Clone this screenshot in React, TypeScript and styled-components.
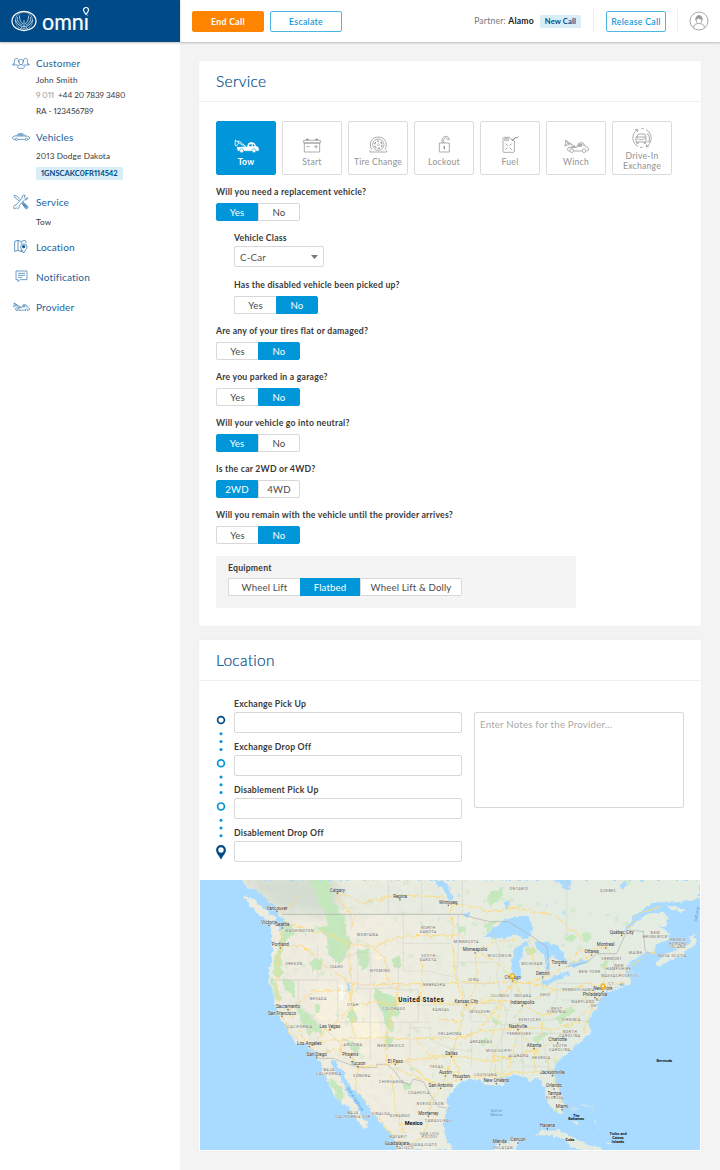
import React from "react";
import styled, { createGlobalStyle } from "styled-components";

const Global = createGlobalStyle`
  * { box-sizing: border-box; }
  body { margin: 0; background: #f3f3f3; font-family: Lato, "Open Sans", sans-serif; color: #3a3a3a; font-variant-numeric: proportional-nums; }
  button, input, textarea { font-family: inherit; outline: none; }
`;

const navy = "#004b87";
const blue = "#0096d9";

const Page = styled.div`
  width: 720px;
  height: 1170px;
  display: grid;
  grid-template-columns: 180px 540px;
  grid-template-rows: 42px 1fr;
  overflow: hidden;
`;

const Brand = styled.div`
  background: ${navy};
  box-shadow: 0 1px 2px rgba(0, 0, 0, 0.25);
  z-index: 2;
  padding: 6px 0 0 10px;
`;

const TopBar = styled.header`
  background: #fff;
  box-shadow: 0 1px 2px rgba(0, 0, 0, 0.24);
  z-index: 1;
  display: flex;
  align-items: center;
  padding: 0 11px 0 12px;
`;

const ActionButton = styled.button<{ $w: number; $solid?: boolean }>`
  width: ${(p) => p.$w}px;
  height: 21px;
  padding: 0;
  margin-right: 6px;
  border-radius: 2px;
  border: 1px solid ${(p) => (p.$solid ? "#ff8400" : "#4db8e5")};
  background: ${(p) => (p.$solid ? "#ff8400" : "#fff")};
  color: ${(p) => (p.$solid ? "#fff" : blue)};
  font-size: 8.8px;
  font-weight: ${(p) => (p.$solid ? 700 : 500)};
  letter-spacing: 0.26px;
  line-height: 20px;
`;

const Partner = styled.div`
  margin-left: auto;
  font-size: 8.6px;
  letter-spacing: 0.2px;
  color: #777;
  white-space: nowrap;
  b { color: #222; }
`;

const Tag = styled.span<{ $tight?: boolean }>`
  display: inline-block;
  height: 13px;
  line-height: 13px;
  margin-left: ${(p) => (p.$tight ? 0 : 6)}px;
  padding: 0 5px;
  border-radius: 2px;
  background: #d9edf6;
  color: ${navy};
  font-size: 7.6px;
  font-weight: 700;
  letter-spacing: ${(p) => (p.$tight ? -0.02 : 0.12)}px;
  white-space: nowrap;
`;

const Divider = styled.i<{ $l: number; $r: number }>`
  width: 1px;
  height: 24px;
  background: #efefef;
  margin: 0 ${(p) => p.$r}px 0 ${(p) => p.$l}px;
`;

const Sidebar = styled.nav`
  background: #fff;
  padding: 13px 0 0 12px;
`;

const NavSection = styled.section<{ $gap: number }>`
  margin-bottom: ${(p) => p.$gap}px;
`;

const NavHead = styled.div`
  height: 16px;
  display: grid;
  grid-template-columns: 18px 1fr;
  column-gap: 6px;
  align-items: center;
  color: #1c5f9b;
  font-size: 10.1px;
  letter-spacing: 0.13px;
  svg { display: block; justify-self: center; }
`;

const NavItem = styled.div<{ $top?: number; $track?: number }>`
  margin: ${(p) => p.$top ?? 0}px 0 0 24px;
  height: 15.7px;
  line-height: 15.7px;
  font-size: 8.2px;
  letter-spacing: ${(p) => p.$track ?? 0.2}px;
`;

const Prefix = styled.span`
  color: #999;
  margin-right: 4px;
`;

const Main = styled.main`
  padding: 19px 19px 0 19px;
`;

const Card = styled.section`
  width: 502px;
  background: #fff;
  border-radius: 1px;
  box-shadow: 0 0 1px rgba(0, 0, 0, 0.12);
  margin-bottom: 14px;
`;

const CardTitle = styled.h2`
  margin: 0;
  height: 41px;
  line-height: 40px;
  padding-left: 17px;
  border-bottom: 1px solid #efefef;
  font-size: 15.5px;
  font-weight: 300;
  letter-spacing: 0.3px;
  color: #004b87;
  -webkit-text-stroke: 0.2px #004b87;
`;

const ServiceBody = styled.div`
  height: 524px;
  padding: 19px 17px 0;
`;

const Tiles = styled.div`
  display: flex;
  gap: 6px;
  margin-bottom: 10px;
`;

const Tile = styled.button<{ $on?: boolean; $bottom: number }>`
  width: 60px;
  height: 54px;
  padding: 0 0 ${(p) => p.$bottom}px;
  display: flex;
  flex-direction: column;
  justify-content: flex-end;
  align-items: center;
  gap: ${(p) => (p.$bottom < 6 ? 3 : 4)}px;
  border: 1px solid ${(p) => (p.$on ? blue : "#dadada")};
  border-radius: 2px;
  background: ${(p) => (p.$on ? blue : "#fff")};
  color: ${(p) => (p.$on ? "#fff" : "#999")};
  font-size: 8.6px;
  font-weight: ${(p) => (p.$on ? 700 : 500)};
  letter-spacing: 0.25px;
  line-height: 10px;
  white-space: pre-line;
`;

const Field = styled.div<{ $indent?: boolean; $h?: number; $gap?: number }>`
  height: ${(p) => p.$h ?? 46.15}px;
  padding-left: ${(p) => (p.$indent ? 18 : 0)}px;
  display: flex;
  flex-direction: column;
  align-items: flex-start;
  gap: ${(p) => p.$gap ?? 3.8}px;
`;

const Label = styled.label`
  height: 14px;
  line-height: 14px;
  font-size: 8.7px;
  font-weight: 700;
  letter-spacing: 0.21px;
  white-space: nowrap;
`;

const Group = styled.div`
  display: flex;
`;

const Option = styled.button<{ $on?: boolean; $w: number }>`
  width: ${(p) => p.$w}px;
  height: 18px;
  padding: 0;
  border: 1px solid ${(p) => (p.$on ? blue : "#d8d8d8")};
  border-right-width: ${(p) => (p.$on ? 1 : 0)}px;
  background: ${(p) => (p.$on ? blue : "#fff")};
  color: ${(p) => (p.$on ? "#fff" : "#4a4a4a")};
  font-size: 9.7px;
  letter-spacing: 0.12px;
  line-height: 16px;
  &:first-child { border-radius: 2px 0 0 2px; }
  &:last-child { border-radius: 0 2px 2px 0; border-right-width: 1px; }
`;

const Select = styled.div`
  width: 90px;
  height: 21px;
  border: 1px solid #d8d8d8;
  border-radius: 2px;
  padding: 0 5px;
  display: flex;
  align-items: center;
  justify-content: space-between;
  font-size: 9.8px;
  letter-spacing: 0.15px;
  color: #555;
`;

const Equipment = styled.div`
  width: 360px;
  height: 52px;
  margin-top: 1.5px;
  padding: 5px 12px;
  background: #f4f4f4;
  border-radius: 1px;
`;

const LocationBody = styled.div`
  height: 199px;
  padding: 16px 17px 0;
  display: grid;
  grid-template-columns: 10px 228px 210px;
  column-gap: 8px;
`;

const Route = styled.div`
  padding-top: 15px;
`;

const Addresses = styled.div`
  display: flex;
  flex-direction: column;
`;

const Input = styled.input`
  width: 228px;
  height: 21px;
  border: 1px solid #d8d8d8;
  border-radius: 2px;
  background: #fff;
`;

const Notes = styled.textarea`
  width: 210px;
  height: 96px;
  margin: 15px 0 0 4px;
  padding: 5px 5px;
  border: 1px solid #d8d8d8;
  border-radius: 2px;
  resize: none;
  font-size: 9.7px;
  line-height: 12px;
  letter-spacing: 0.19px;
  &::placeholder { color: #aaa; opacity: 1; }
`;

const MapFrame = styled.div`
  padding: 0 1px 1px;
  height: 271px;
  svg { display: block; }
`;

/* ---------- icons ---------- */

const Logo = () => (
  <svg width="84" height="32" viewBox="0 0 84 32" fill="none" stroke="#fff">
    <ellipse cx="14" cy="15" rx="12" ry="9.6" strokeWidth="1.2" />
    <ellipse cx="14" cy="14.6" rx="8.6" ry="8.6" strokeWidth="0.7" opacity="0.7" />
    <path d="M7.500 11c-.8 4 1.500 6.500 4.500 8M9.500 9.500c-.4 4 1 6.500 3.500 8.500M20.500 11c.8 4-1.500 6.500-4.500 8M18.500 9.500c.4 4-1 6.500-3.500 8.500M5.500 14c1 3.500 3.500 5.500 7 6.500M22.500 14c-1 3.500-3.500 5.500-7 6.500M14 14v9M10.500 22.500l3.500-3 3.500 3" strokeWidth="0.8" opacity="0.85" />
    <text x="32" y="23.600" fontSize="24" fontWeight="400" fontFamily="Lato" fill="#fff" stroke="#fff" strokeWidth="0.2" textLength="47" lengthAdjust="spacingAndGlyphs">omni</text>
    <path d="M76 8.200c-1.500-2-2.400-2.900-2.400-4.300a2.400 2.400 0 0 1 4.800 0c0 1.400-.9 2.300-2.400 4.300z" fill={navy} stroke={navy} strokeWidth="3.400" />
    <path d="M76 8.400c-1.600-2-2.500-2.900-2.500-4.400a2.500 2.500 0 0 1 5 0c0 1.500-.9 2.400-2.500 4.400z" strokeWidth="1.200" />
  </svg>
);

const Avatar = () => (
  <svg width="20" height="20" viewBox="0 0 60 60" fill="none" stroke="#999" strokeWidth="2.600">
    <circle cx="30" cy="30" r="27" />
    <path d="M20 27c0-8 3-13 10-13s10 5 10 13" />
    <path d="M21 24c0 9 3 14 9 14s9-5 9-14c-6 1-9-1-10-3-2 2-4 3-8 3z" />
    <path d="M22 18c3-6 13-6 16 0l1 6c-5 0-8-1-10-4-2 3-4 4-8 4z" fill="#999" stroke="none" />
    <path d="M14 50c0-8 4-11 12-12M46 50c0-8-4-11-12-12" />
  </svg>
);

const People = () => (
  <svg width="18" height="12" viewBox="0 0 54 36" fill="none" stroke="#3d7db3" strokeWidth="2.200">
    <path d="M5 23c3-3 2-9 3-14 1-6 9-7 11-1 1 4 0 7 2 9M18 24H2c0-3 2-4 5-4M49 23c-3-3-2-9-3-14-1-6-9-7-11-1-1 4 0 7-2 9M36 24h16c0-3-2-4-5-4" />
    <path d="M21 13c0-8 12-8 12 0 0 5-1 10-6 10s-6-5-6-10zM24 22c0 4-6 3-7 6s1 6 4 6h12c3 0 5-3 4-6s-7-2-7-6" />
  </svg>
);

const Car = () => (
  <svg width="18" height="8" viewBox="0 0 54 24" fill="none" stroke="#3d7db3" strokeWidth="2.300">
    <path d="M8 19H4c-3-2-3-7 1-9l8-2c5-6 9-6 14-6 7 0 10 3 14 7 6 0 11 1 12 6 0 3-1 4-5 4M18 19h20" />
    <path d="M14 9h27M27 2v7M17 8l5-5M20 6h15" />
    <circle cx="13" cy="19" r="3.600" /><circle cx="43" cy="19" r="3.600" />
  </svg>
);

const Tools = () => (
  <svg width="16" height="16" viewBox="0 0 48 48" fill="none" stroke="#3d7db3" strokeWidth="2.300">
    <path d="M5 3l9 5 4 5 8 9-3 3-9-8-6-4-5-8z" />
    <path d="M27 28l3-4 14 13c3 4-3 10-7 6z" fill="#3d7db3" fillOpacity="0.5" />
    <path d="M29 29l11 11M32 28l10 10M30 32l8 8" />
    <path d="M44 11l-6 3-4-4 3-6c-7-2-12 3-10 9L9 33c-7 0-9 6-5 12l6-4 4 4c6-4 5-8 4-10l17-18c5 2 10-1 9-6z" fill="#fff" />
  </svg>
);

const MapIcon = () => (
  <svg width="14" height="15" viewBox="0 0 42 45" fill="none" stroke="#3d7db3" strokeWidth="2.400">
    <path d="M2 7l10-3 10 4 8-4 6 3v5M2 7v30l10-3 10 4M12 4v30M22 8v6M22 31v7l5-2" />
    <path d="M29 42c-5-9-9-13-9-18a9.500 9.500 0 0 1 19 0c0 5-5 9-10 18z" />
    <circle cx="29" cy="23" r="3.600" fill={navy} stroke={navy} />
  </svg>
);

const Message = () => (
  <svg width="13" height="13" viewBox="0 0 39 39" fill="none" stroke="#3d7db3" strokeWidth="2.200">
    <path d="M3 3h33v26H15l-6 6v-6H3zM9 10h21M9 16h21M9 22h13" />
  </svg>
);

const Truck = ({ w, color }: { w: number; color: string }) => (
  <svg width={w} height={(w * 42) / 75} viewBox="0 0 75 42" fill="none" stroke={color} strokeWidth={w < 20 ? 3 : 2.200} strokeLinejoin="round">
    <path d="M3 3l31 20H24L6 5M6 5L4 20c-2 2-3 0-2-2M12 12l-6 10M16 13l-3 6" />
    <path d="M17 36h-4c-3-3-3-7-1-10l26-1 6-12c2-2 10-2 15 0l5 9c8 2 9 4 9 12l-5 2M30 36h23" />
    <path d="M42 22l4-7h7v7zM56 15l4 7" strokeWidth="1.800" fill={color} fillOpacity="0.6" />
    <circle cx="23" cy="35" r="5.500" />
    <circle cx="60" cy="35" r="5.500" />
  </svg>
);

const TowSolid = () => (
  <svg width="25" height="14" viewBox="0 0 75 42" fill="#fff" stroke="#fff" strokeLinejoin="round">
    <path d="M3 3l29 20M9 7h8l19 16M4 4L3 18c1 3 4 2 4 0M14 12l-7 10" fill="none" strokeWidth="2.600" />
    <path d="M9 25l30-1 5-11c3-3 13-3 17 0l5 9c7 2 8 4 8 13H12z" strokeWidth="1.500" />
    <path d="M44 22l3-6h6v6zM56 16h3l3 6h-6z" fill={blue} stroke="none" />
    <circle cx="23" cy="35" r="6" stroke={blue} strokeWidth="1.500" />
    <circle cx="60" cy="35" r="6" stroke={blue} strokeWidth="1.500" />
  </svg>
);

const grey = { fill: "none", stroke: "#8f8f8f", strokeWidth: 2.2 } as const;

const Battery = () => (
  <svg width="18" height="15" viewBox="0 0 54 45" {...grey}>
    <path d="M2 7h50v8H2zM4 15h46v27H4zM10 26h10M34 26h10M39 21v10" /><path d="M9 4h8M37 4h8" strokeWidth="4" />
  </svg>
);
const Tire = () => (
  <svg width="19" height="17" viewBox="0 0 57 51" {...grey}>
    <path d="M8 41C-2 22 8 3 28 3s30 19 20 38M3 48h50M3 43v5M53 43v5" />
    <circle cx="28" cy="26" r="17" />
    <circle cx="28" cy="26" r="11" strokeWidth="3.600" strokeDasharray="7 4.520" />
    <circle cx="28" cy="26" r="3" strokeWidth="1.400" />
  </svg>
);
const Lock = () => (
  <svg width="13" height="18" viewBox="0 0 39 54" {...grey}>
    <path d="M4 24h30v27H4zM12 24v-8M12 17c0-17 21-17 22-3h-5c-1-8-11-8-12 2v8" /><path d="M19 33v10" strokeWidth="4" />
  </svg>
);
const Fuel = () => (
  <svg width="17" height="18" viewBox="0 0 51 54" {...grey}>
    <path d="M3 13c0-6 3-6 6-6h14l6 6 8 5v31c0 2-1 3-3 3H6c-2 0-3-1-3-3zM8 11h12v5H8z" />
    <path d="M28 14l5 3 6-9h7l4-4M34 13l6-6" strokeWidth="3" />
    <path d="M11 26l6 6M23 38l6 6M29 26l-6 6M17 38l-6 6" strokeWidth="2.600" />
  </svg>
);
const Exchange = () => (
  <svg width="20" height="20" viewBox="0 0 60 60" {...grey}>
    <path d="M18 55C-2 46-2 16 15 6M9 5l8-1-1 8M42 5c20 9 20 39 3 50M51 55l-8 2 1-8M28 2h7M24 58h8" />
    <path d="M14 27l5-9h19l4 9v15H12V27zM12 27h30M14 42v4h5v-4M36 42v4h5v-4M14 33h6M34 33h6M21 35h12M44 19h5l3 8v14h-6" />
  </svg>
);

const RouteMarks = () => {
  const stops = [8, 51.2, 94.4];
  return (
    <svg width="10" height="150" viewBox="0 0 10 150" fill="none">
      {stops.map((y, i) => (
        <g key={y}>
          <circle cx="5" cy={y} r="3.400" stroke={i === 0 ? navy : blue} strokeWidth="1.700" />
          {[13.800, 21.600, 29.400].map((d) => <circle key={d} cx="5" cy={y + d} r="1.500" fill={blue} />)}
        </g>
      ))}
      <path d="M5 147.500c-2.500-4.500-4.900-6.500-4.900-9.500a4.900 4.900 0 0 1 9.800 0c0 3-2.400 5-4.900 9.500z" fill={navy} />
      <circle cx="5" cy="138" r="2.700" fill="#fff" />
    </svg>
  );
};

/* ---------- map ---------- */

type Mark = [string, number, number];

const westCities: Mark[] = [
  ["Calgary", 427, 50], ["Regina", 615, 70], ["Vancouver", 246, 104], ["Victoria", 222, 146], ["Seattle", 262, 154],
  ["Portland", 256, 214], ["Sacramento", 279, 399], ["San Francisco", 261, 419], ["Las Vegas", 405, 459],
  ["Los Angeles", 343, 510], ["San Diego", 365, 542], ["Phoenix", 466, 542], ["Tucson", 489, 570], ["El Paso", 601, 563],
  ["Austin", 751, 598], ["San Antonio", 737, 635], ["Monterrey", 700, 719], ["Guadalajara", 606, 809],
];
const eastCities: Mark[] = [
  ["Winnipeg", -5, 86], ["Minneapolis", 75, 229], ["Chicago", 188, 313], ["Detroit", 278, 301], ["Toronto", 328, 266],
  ["Ottawa", 425, 235], ["Montreal", 467, 214], ["Québec City", 515, 176], ["New York", 459, 345],
  ["Philadelphia", 435, 363], ["Kansas City", 49, 385], ["Indianapolis", 217, 387], ["Nashville", 204, 459],
  ["Charlotte", 323, 499], ["Atlanta", 252, 516], ["Dallas", 4, 540], ["Houston", 34, 609], ["New Orleans", 139, 621],
  ["Jacksonville", 307, 597], ["Orlando", 312, 637], ["Tampa", 313, 660], ["Miami", 336, 699], ["Havana", 292, 756],
  ["Mérida", 149, 803], ["Cancún", 204, 799],
];
const westStates: Mark[] = [
  ["WASHINGTON", 314, 171], ["OREGON", 297, 270], ["IDAHO", 425, 278], ["MONTANA", 518, 183], ["NORTH", 700, 162], ["DAKOTA", 700, 174],
  ["SOUTH", 700, 245], ["DAKOTA", 700, 257], ["WYOMING", 555, 292], ["NEBRASKA", 718, 332], ["NEVADA", 370, 376],
  ["UTAH", 474, 394], ["COLORADO", 597, 404], ["KANSAS", 738, 409], ["CALIFORNIA", 315, 459], ["ARIZONA", 474, 512],
  ["NEW MEXICO", 588, 517], ["TEXAS", 725, 578], ["OKLAHOMA", 765, 479], ["BAJA", 402, 587], ["CALIFORNIA", 402, 599],
  ["SONORA", 501, 606], ["CHIHUAHUA", 590, 624], ["COAHUILA", 672, 657], ["NUEVO LEON", 706, 690], ["TAMAULIPAS", 730, 740],
  ["SINALOA", 558, 721], ["DURANGO", 615, 725], ["BAJA", 474, 717], ["CALIFORNIA SUR", 474, 729], ["NAYARIT", 610, 790],
  ["SAN LUIS", 704, 779], ["POTOSI", 704, 790], ["GUANAJUATO", 684, 812], ["JALISCO", 630, 823],
];
const eastStates: Mark[] = [
  ["ONTARIO", 207, 44], ["QUEBEC", 475, 50], ["MINNESOTA", 49, 203], ["WISCONSIN", 149, 245], ["MICHIGAN", 246, 270],
  ["IOWA", 71, 318], ["ILLINOIS", 151, 366], ["INDIANA", 218, 366], ["OHIO", 285, 363], ["PENNSYLVANIA", 386, 349],
  ["NEW YORK", 419, 295], ["VERMONT", 485, 254], ["MAINE", 557, 237], ["NEW", 508, 275], ["HAMPSHIRE", 506, 286],
  ["MASSACHUSETTS", 509, 307], ["CT", 484, 330], ["RI", 517, 332], ["NJ", 446, 378], ["DE", 431, 397],
  ["MARYLAND", 399, 384], ["WEST", 320, 404], ["VIRGINIA", 320, 415], ["VIRGINIA", 364, 438], ["MISSOURI", 91, 414],
  ["KENTUCKY", 240, 437], ["TENNESSEE", 207, 479], ["NORTH", 360, 475], ["CAROLINA", 360, 487], ["SOUTH", 330, 516],
  ["CAROLINA", 330, 528], ["ARKANSAS", 93, 503], ["MISSISSIPPI", 147, 531], ["ALABAMA", 206, 546], ["GEORGIA", 274, 553],
  ["LOUISIANA", 107, 604], ["FLORIDA", 315, 671], ["NEW", 616, 177], ["BRUNSWICK", 616, 188], ["PRINCE", 684, 197],
  ["EDWARD", 684, 209], ["ISLAND", 684, 220], ["NOVA SCOTIA", 668, 245], ["YUCATAN", 160, 822],
];

const land =
  "M140 15L158 38 190 48 215 72 236 92 248 108 252 122 268 132 262 150 266 165 252 172 250 155 232 148 222 153 229 180 232 215 230 250 222 285 222 320 235 355 240 395 255 420 262 440 275 450 278 465 290 485 300 502 325 508 345 520 362 530 368 548 375 565 385 590 395 612 410 640 412 660 425 672 445 685 470 705 480 725 495 745 510 765 518 758 515 742 500 725 490 700 475 680 455 655 450 635 440 615 420 590 410 565 412 556 430 570 445 590 455 610 470 640 485 650 505 670 520 700 540 725 565 750 590 775 600 800 606 826H774L760 800 750 778 746 750 752 720 758 690 758 662 772 645 785 632 805 618 830 612 855 615 870 628 895 632 925 630 930 618 915 610 935 603 965 600 990 608 1005 620 1028 606 1045 630 1053 650 1050 668 1065 690 1080 712 1100 718 1107 700 1103 670 1090 640 1077 612 1070 590 1080 570 1105 545 1140 515 1165 490 1185 480 1190 460 1175 440 1190 425 1205 395 1220 370 1235 350 1262 333 1295 325 1298 335 1310 318 1295 300 1290 285 1305 262 1325 250 1350 232 1362 225 1370 235 1385 210 1415 195 1422 178 1408 165 1395 153 1412 148 1420 125 1400 110 1360 116 1325 140 1295 165 1285 170 1305 138 1335 105 1385 82 1450 82 1515 68V15Z";
const islands =
  "M143 62L175 72 208 100 238 128 240 140 220 137 190 115 160 92ZM1380 268L1412 236 1450 222 1490 200 1480 185 1498 180 1506 205 1470 232 1425 258 1395 273ZM1415 92L1450 95 1470 108 1460 114 1430 102ZM1428 213L1450 220 1468 213 1448 206ZM1225 350L1275 333 1285 336 1240 352ZM1015 782L1035 768 1070 765 1105 770 1140 790 1180 808 1215 815 1225 826H1140L1120 805 1075 782 1045 778ZM898 826L902 808 930 800 972 795 966 812 962 826ZM1130 735L1150 742 1142 754 1134 742ZM1235 804L1250 800 1245 810Z";
const lakes =
  "M866 185L895 160 935 130 970 122 1003 124 1012 150 1008 180 992 192 965 178 930 188 900 188ZM948 300L952 240 968 210 1000 198 1002 208 985 222 978 260 978 300 966 322 952 320ZM1015 200L1055 202 1085 212 1108 238 1112 262 1090 258 1072 240 1060 258 1062 285 1052 282 1048 238 1025 220ZM1040 326L1050 314 1090 300 1125 290 1120 300 1080 320 1055 332ZM1112 272L1130 262 1178 254 1172 266 1140 276ZM1075 15H1128L1122 40 1110 44 1095 25ZM718 15L752 22 765 55 778 72 768 76 748 58 745 38 722 30ZM810 110L824 118 814 130 804 118ZM450 322L462 330 468 348 458 346ZM928 80L942 78 940 105 930 100ZM1275 30L1290 22 1296 32 1286 42Z";
const forests =
  "M262 130L290 145 300 175 270 200 255 240 262 290 250 310 235 300 240 255 250 220 258 190ZM225 300L245 330 260 380 240 370ZM260 310L300 320 300 370 270 340ZM300 385L340 420 375 455 385 480 350 465 345 485 315 430ZM340 15L400 15 415 80 450 130 455 180 470 200 455 240 430 270 400 235 395 185 360 155 400 150 380 90ZM485 225L520 220 525 260 505 290 490 270ZM540 340L600 365 615 415 590 430 600 470 575 460 560 410 535 370ZM470 395L490 430 470 450 460 420ZM440 485L490 510 495 545 465 520ZM575 470L590 500 575 530ZM592 250L615 245 620 275 598 280ZM360 390L380 385 375 410 362 415ZM410 610L440 640 450 670 435 685 415 660 425 650 400 620ZM340 260L380 250 380 280 355 290ZM1010 490L1045 470 1055 480 1025 505ZM1080 430L1130 395 1140 405 1095 445ZM875 60L925 35 925 60 885 95ZM865 145L910 135 880 170ZM990 225L1015 215 1030 235 1000 240ZM1080 700L1095 705 1090 716 1078 710ZM890 425L915 440 905 455ZM850 500L875 485 880 500 860 515ZM790 155L810 150 812 172 795 175ZM1160 180L1185 170 1190 195 1165 200ZM1105 185L1145 180 1130 205ZM1215 270L1235 245 1240 275 1225 290ZM640 580L655 575 650 590ZM620 620L650 630 630 650Z";
const borders =
  "M262 118H805M625 118V288M368 210V315H228M468 118V165M228 315H430M310 315V385L450 520M428 315V442M430 442H700M488 232V330H526V232ZM488 330V340H610V250M526 340V555M610 345H670V442M645 442V562H575M625 205H768M625 288H700L745 300 775 305M665 390H790M645 458H706V495L765 520M470 200L430 260 488 232M790 118V210L785 300 800 330 830 440M785 262H890M805 325H905M800 385H908M830 440H920V475M890 150L915 240 905 300 920 370 935 420 925 475 895 540 885 590M830 460V575M765 520L830 530M925 475H1145M915 450L1100 430 1180 440M948 310V400M1005 320V400M920 475V600M980 475L985 600M1040 475L1062 590M985 575H1062M1085 325H1190V345L1205 360M1085 325V375L1055 410M1100 375H1205M1230 235V300H1290M1255 235V300M1115 15V180M580 15V118M680 15V118M802 15V118";
const nation =
  "M262 118H805L840 130 885 140 940 140 1012 185 1055 215 1062 270 1040 315M1120 275L1175 262 1205 236H1265L1290 180 1305 165 1345 170 1350 225 1362 235M365 550L415 550 490 578H545V568L577 568 600 590 620 620 645 630 655 612 685 620 710 665 730 695 762 700";
const roads = [
  "M258 155L300 150 360 175 380 165 455 205 530 215 600 190 640 182 800 180 840 230 895 255 945 300 955 320 1000 325 1060 300 1120 270 1200 235 1280 185",
  "M262 160L255 215 248 270 242 340 262 420M255 215L320 210 370 255 420 295 460 320 530 330 610 325 700 330 780 322 860 325 950 320 1040 330 1100 350 1180 325 1225 340 1290 320",
  "M262 420L310 385 350 350 430 345 465 350 470 395 405 460 343 512 365 545 420 520 465 540 490 575 575 570 630 555 700 550 770 540 850 555 920 555 1018 525 1090 490 1150 430 1205 370 1225 345",
  "M343 512L400 495 475 490 560 490 660 490 780 490 850 470 910 465 970 460 1080 460 1160 440M462 180L462 240 470 320 475 490M610 325L605 390 570 490 577 565M470 395L540 380 605 390 680 375 730 385 815 390 900 360 950 340",
  "M258 110L300 80 310 65M425 50L440 90 480 120 475 160M425 50L500 85 600 60 740 65 768 90M768 90L772 180 780 300 812 390 790 480 770 540 755 600 738 635 710 670 700 718M577 565L650 600 737 632 800 610 870 600 905 610 960 590 1070 595",
  "M738 575L812 600M770 540L800 610M840 230L845 330 815 390 880 435 920 370 960 320M920 370L910 430 890 480 900 560 905 610M960 320L982 385 970 460 960 520 945 570 905 610M982 385L1050 360 1090 340M982 385L920 375 815 390M970 460L1018 520 1062 570 1072 595 1090 640 1105 700M1018 520L950 550 890 545M1018 520L1020 590M1045 420L1040 480 1018 520M1043 420L1000 400 982 385M1090 490L1075 560M1043 420L1100 410 1200 350M1205 370L1180 430 1165 475",
  "M843 230L900 200 960 195M1040 300L1012 250 1005 190M1115 265L1150 230 1190 225 1232 215M1232 215L1260 270 1285 300M1225 340L1230 270M1280 185L1340 110 1400 95M1285 300L1345 240 1380 230M261 420L280 470 320 500M279 400L300 450 343 510M768 90L840 95 880 110 960 100 1080 120 1160 190",
  "M530 215L570 250 580 320M700 550L755 600M630 555L680 600 738 635M700 718L690 780 640 815M590 600L600 700 640 815M490 578L480 640 530 700 600 790 640 815M780 490L830 480 880 435M790 440L730 430M660 490L700 540 770 540M440 500L430 560M680 375V250",
];

const blobs = Array.from({ length: 190 }, (_, i) => {
  const x = 260 + ((i * 337) % 1090);
  const y = 20 + ((i * 191 + ((i * i) % 47)) % 590);
  return { x, y, r: 2 + ((i * 7) % 6), k: i % 4 };
}).filter((b) => !(b.x > 1190 && b.y > 330) && !(b.x > 1100 && b.y > 500));

const USMap = () => (
  <svg width="500" height="270" viewBox="15 15 1500 810" fontFamily="Roboto, sans-serif" textAnchor="middle">
    <defs>
      <linearGradient id="ground" x1="0" x2="1" y1="0" y2="0">
        <stop offset="0" stopColor="#eeebdf" />
        <stop offset="0.3" stopColor="#f1ede1" />
        <stop offset="0.45" stopColor="#ebede1" />
        <stop offset="0.65" stopColor="#e4ebe0" />
        <stop offset="1" stopColor="#e5ece1" />
      </linearGradient>
      <filter id="rough" x="0" y="0" width="1" height="1">
        <feTurbulence type="fractalNoise" baseFrequency="0.06" numOctaves="3" seed="4" />
        <feDisplacementMap in="SourceGraphic" scale="18" xChannelSelector="R" yChannelSelector="G" />
      </filter>
      <filter id="soft"><feGaussianBlur stdDeviation="16" /></filter>
      <filter id="relief" x="0" y="0" width="1" height="1">
        <feTurbulence type="fractalNoise" baseFrequency="0.035" numOctaves="4" seed="9" />
        <feColorMatrix values="0 0 0 0 0.55  0 0 0 0 0.6  0 0 0 0 0.56  1.600 0 0 0 -0.720" />
      </filter>
      <clipPath id="shore"><path d={land} /></clipPath>
    </defs>
    <rect x="15" y="15" width="1500" height="810" fill="#a9daff" />
    <g filter="url(#rough)">
      <path d={land + islands} fill="url(#ground)" />
      <g clipPath="url(#shore)">
        <path d="M130 0H420L450 60 400 130 330 110 262 118 220 80Z" fill="#d5ddd2" filter="url(#soft)" />
        <path d="M340 330L450 320 560 440 540 540 400 520Z" fill="#f8f2e0" opacity="0.7" filter="url(#soft)" />
        <path d="M420 15H800V118H460Z" fill="#e6ebe0" opacity="0.8" filter="url(#soft)" />
        <path d={forests} fill="#c5e8bd" />
        <path d="M475 440L550 430 555 490 500 485ZM430 330L445 335 448 370 432 372ZM470 380L500 400 480 410ZM350 410L400 430 390 440ZM530 240L570 245 550 258Z" fill="#fbf5dc" opacity="0.8" />
        <path d="M430 325L444 330 446 368 434 372Z" fill="#fafafa" />
      </g>
      {blobs.map((b, i) => (
        <ellipse key={i} cx={b.x} cy={b.y} rx={b.r * (b.k === 1 ? 0.7 : 1.300)} ry={b.r} fill={b.k === 1 && b.y < 160 && b.x > 700 ? "#a9daff" : "#c9e8c2"} opacity={b.x > 760 ? 0.6 : 0.5} />
      ))}
      <path d={lakes} fill="#a9daff" />
      <path d="M1160 690Q1190 690 1195 705M1130 700L1150 698M1195 735L1215 765M1240 770L1255 785" stroke="#dfe9df" strokeWidth="3" fill="none" />
    </g>
    <g clipPath="url(#shore)">
      <rect x="120" y="15" width="640" height="811" filter="url(#relief)" opacity="0.15" />
    </g>
    <path d={borders} fill="none" stroke="#cfcfca" strokeWidth="1.400" />
    <path d={nation} fill="none" stroke="#adb0ab" strokeWidth="2" />
    <g filter="url(#rough)" fill="none" stroke="#fbdb84" strokeWidth="3" strokeLinejoin="round">
      {roads.map((d) => <path key={d} d={d} />)}
    </g>
    {[{ dx: 0, cities: westCities, states: westStates }, { dx: 765, cities: eastCities, states: eastStates }].map((half) => (
      <g key={half.dx} transform={`translate(${half.dx} 0)`} stroke="#f3f2ea" strokeWidth="1.200" paintOrder="stroke">
        <g fontSize="11" letterSpacing="1.500" fill="#6c6c6c">
          {half.states.map(([n, x, y], i) => <text key={i} x={x} y={y}>{n}</text>)}
        </g>
        <g fontSize="13.500" fill="#333">
          {half.cities.map(([n, x, y]) => (
            <React.Fragment key={n}>
              <text x={x} y={y}>{n}</text>
              <circle cx={x} cy={y + 5} r="2.400" fill="#666" />
            </React.Fragment>
          ))}
        </g>
      </g>
    ))}
    <g fill="#111" fontWeight="700">
      <text x="679" y="380" fontSize="19" letterSpacing="1.800">United States</text>
      <text x="656" y="749" fontSize="16.500">Mexico</text>
      <g fontSize="11.500">
        <text x="1125" y="798">Cuba</text>
        <text x="1144" y="725">The</text><text x="1144" y="736">Bahamas</text>
        <text x="1408" y="560">Bermuda</text>
        <text x="1269" y="781">Turks and</text><text x="1269" y="792">Caicos</text><text x="1269" y="804">Islands</text>
      </g>
    </g>
    <g fill="#4f95d0" fontSize="11">
      <text x="904" y="711">Gulf of</text><text x="904" y="722">Mexico</text>
      <text transform="translate(477 674) rotate(57)">Gulf of California</text>
      <text transform="translate(1509 118) rotate(-78)">Gulf of St</text>
    </g>
    {[[952, 318], [1224, 348]].map(([x, y]) => (
      <g key={x} transform={`translate(${x} ${y})`}>
        <path d="M0 0C-2-6-8-9-8-15a8 8 0 0 1 16 0c0 6-6 9-8 15z" fill="#f9b71c" />
        <circle cy="-15" r="3" fill="#fff" />
      </g>
    ))}
  </svg>
);

/* ---------- composition ---------- */

const Toggle = ({ options, on, widths = [42, 42] }: { options: string[]; on: number; widths?: number[] }) => (
  <Group>
    {options.map((o, i) => (
      <Option key={o} $w={widths[i]} $on={i === on}>{o}</Option>
    ))}
  </Group>
);

const Question = ({ text, options = ["Yes", "No"], on, indent }: { text: string; options?: string[]; on: number; indent?: boolean }) => (
  <Field $indent={indent}>
    <Label>{text}</Label>
    <Toggle options={options} on={on} />
  </Field>
);

const services = [
  { name: "Tow", icon: <TowSolid /> },
  { name: "Start", icon: <Battery /> },
  { name: "Tire Change", icon: <Tire /> },
  { name: "Lockout", icon: <Lock /> },
  { name: "Fuel", icon: <Fuel /> },
  { name: "Winch", icon: <Truck w={25} color="#8f8f8f" /> },
  { name: "Drive-In\nExchange", icon: <Exchange /> },
];

export default function App() {
  return (
    <>
      <Global />
      <Page>
        <Brand><Logo /></Brand>
        <TopBar>
          <ActionButton $w={72} $solid>End Call</ActionButton>
          <ActionButton $w={72}>Escalate</ActionButton>
          <Partner>Partner: <b>Alamo</b></Partner>
          <Tag>New Call</Tag>
          <Divider $l={12} $r={12} />
          <ActionButton $w={60}>Release Call</ActionButton>
          <Divider $l={5} $r={11} />
          <Avatar />
        </TopBar>

        <Sidebar>
          <NavSection $gap={9.400}>
            <NavHead><People />Customer</NavHead>
            <NavItem $top={1.500}>John Smith</NavItem>
            <NavItem $track={-0.100}><Prefix>9 011</Prefix>+44 20 7839 3480</NavItem>
            <NavItem $track={-0.020}>RA - 123456789</NavItem>
          </NavSection>
          <NavSection $gap={12}>
            <NavHead><Car />Vehicles</NavHead>
            <NavItem $top={4.500} $track={0.140}>2013 Dodge Dakota</NavItem>
            <NavItem $top={1}><Tag $tight>1GNSCAKC0FR114542</Tag></NavItem>
          </NavSection>
          <NavSection $gap={8}>
            <NavHead><Tools />Service</NavHead>
            <NavItem $top={5}>Tow</NavItem>
          </NavSection>
          <NavSection $gap={14}><NavHead><MapIcon />Location</NavHead></NavSection>
          <NavSection $gap={14}><NavHead><Message />Notification</NavHead></NavSection>
          <NavSection $gap={0}><NavHead><Truck w={17} color="#3d7db3" />Provider</NavHead></NavSection>
        </Sidebar>

        <Main>
          <Card>
            <CardTitle>Service</CardTitle>
            <ServiceBody>
              <Tiles>
                {services.map((s, i) => (
                  <Tile key={s.name} $on={i === 0} $bottom={s.name.includes("\n") ? 3 : 7}>{s.icon}{s.name}</Tile>
                ))}
              </Tiles>
              <Question text="Will you need a replacement vehicle?" on={0} />
              <Field $indent $h={46.600} $gap={1}>
                <Label>Vehicle Class</Label>
                <Select>C-Car<svg width="7" height="4" viewBox="0 0 7 4"><path d="M0 0h7L3.500 4z" fill="#777" /></svg></Select>
              </Field>
              <Question text="Has the disabled vehicle been picked up?" on={1} indent />
              <Question text="Are any of your tires flat or damaged?" on={1} />
              <Question text="Are you parked in a garage?" on={1} />
              <Question text="Will your vehicle go into neutral?" on={0} />
              <Question text="Is the car 2WD or 4WD?" options={["2WD", "4WD"]} on={0} />
              <Question text="Will you remain with the vehicle until the provider arrives?" on={1} />
              <Equipment>
                <Field $gap={3}>
                  <Label>Equipment</Label>
                  <Toggle options={["Wheel Lift", "Flatbed", "Wheel Lift & Dolly"]} on={1} widths={[72, 60, 102]} />
                </Field>
              </Equipment>
            </ServiceBody>
          </Card>

          <Card>
            <CardTitle>Location</CardTitle>
            <LocationBody>
              <Route><RouteMarks /></Route>
              <Addresses>
                {["Exchange Pick Up", "Exchange Drop Off", "Disablement Pick Up", "Disablement Drop Off"].map((t) => (
                  <Field key={t} $h={43.150} $gap={1}>
                    <Label>{t}</Label>
                    <Input />
                  </Field>
                ))}
              </Addresses>
              <Notes placeholder="Enter Notes for the Provider..." />
            </LocationBody>
            <MapFrame><USMap /></MapFrame>
          </Card>
        </Main>
      </Page>
    </>
  );
}
